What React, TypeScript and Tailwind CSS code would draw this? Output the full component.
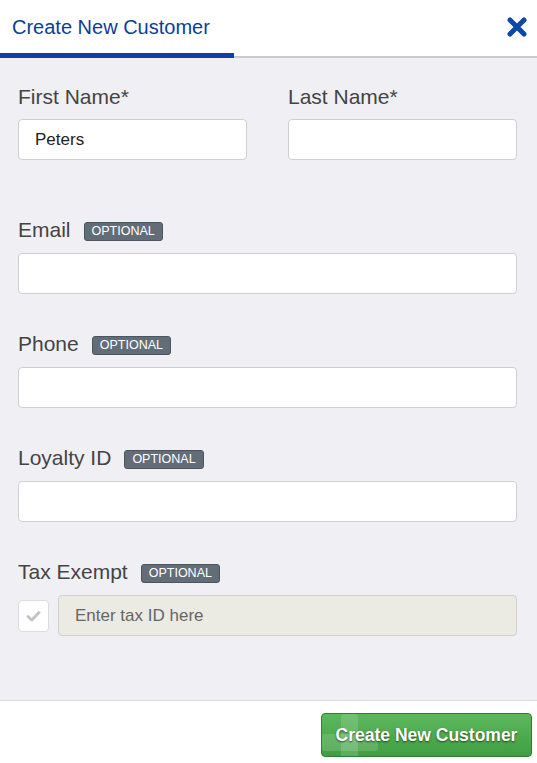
import React from "react";

function Badge() {
  return (
    <span className="relative top-[2px] ml-[13px] inline-flex h-[19px] items-center rounded-[3px] border border-[#4b5560] bg-[#636d78] px-[7px] text-[12.5px] font-normal leading-none text-white">
      OPTIONAL
    </span>
  );
}

function Label({ text, optional }: { text: string; optional?: boolean }) {
  return (
    <div className="flex h-[23px] items-center text-[21px] leading-[23px] text-[#444]">
      <span>{text}</span>
      {optional && <Badge />}
    </div>
  );
}

function Input({ value }: { value?: string }) {
  return (
    <div className="flex h-[41px] items-center rounded-[4px] border border-[#cfcfcf] bg-white px-4 text-[17px] text-[#222]">
      {value}
    </div>
  );
}

export default function App() {
  return (
    <div
      className="flex h-[763px] w-[537px] flex-col bg-white"
      style={{ fontFamily: '"Liberation Sans", Arial, sans-serif' }}
    >
      <div className="relative flex h-[58px] shrink-0 items-center justify-between border-b-2 border-[#cbcbcb] bg-white pb-[2px] pl-3 pr-[9px]">
        <span className="text-[20px] text-[#0d3d99]">Create New Customer</span>
        <svg width="22" height="20" viewBox="0 0 22 20" className="mb-[1px]">
          <path d="M4 3 L18 17 M18 3 L4 17" stroke="#0d47a8" strokeWidth="5" strokeLinecap="round" />
        </svg>
        <div className="absolute -bottom-[2px] left-0 h-[5px] w-[234px] bg-[#0b44a0]" />
      </div>

      <div className="flex flex-1 flex-col bg-[#f0eff4] pl-[18px] pr-[20px] pt-[27px]">
        <div className="grid grid-cols-2 gap-x-[41px]">
          <div className="flex flex-col gap-[11px]">
            <Label text="First Name*" />
            <Input value="Peters" />
          </div>
          <div className="flex flex-col gap-[11px]">
            <Label text="Last Name*" />
            <Input />
          </div>
        </div>

        <div className="mt-[58px] flex flex-col gap-[12px]">
          <Label text="Email" optional />
          <Input />
        </div>

        <div className="mt-[38px] flex flex-col gap-[12px]">
          <Label text="Phone" optional />
          <Input />
        </div>

        <div className="mt-[38px] flex flex-col gap-[12px]">
          <Label text="Loyalty ID" optional />
          <Input />
        </div>

        <div className="mt-[38px] flex flex-col gap-[12px]">
          <Label text="Tax Exempt" optional />
          <div className="flex items-center gap-[9px]">
            <div className="flex h-[32px] w-[31px] shrink-0 items-center justify-center rounded-[4px] border border-[#dcdcdc] bg-white">
              <svg width="15" height="12" viewBox="0 0 15 12">
                <path d="M2 6.5 L5.8 10 L13 2.5" fill="none" stroke="#c4c4c4" strokeWidth="3" strokeLinecap="round" strokeLinejoin="round" />
              </svg>
            </div>
            <div className="flex h-[41px] flex-1 items-center rounded-[4px] border border-[#d0d0d0] bg-[#ebebe4] px-4 text-[17px] text-[#666]">
              Enter tax ID here
            </div>
          </div>
        </div>
      </div>

      <div className="flex h-[63px] shrink-0 items-start justify-end border-t border-[#dddddd] bg-white pr-[5px] pt-[12px]">
        <button className="relative h-[44px] w-[211px] overflow-hidden rounded-[4px] border border-[#2e7d32] bg-gradient-to-b from-[#5cb85c] to-[#3f9f42] text-[17.5px] font-bold text-white [text-shadow:0_1px_2px_rgba(0,0,0,0.6)]">
          <div className="absolute left-[19px] top-0 h-[44px] w-[17px] rounded-[3px] bg-white/15" />
          <div className="absolute left-0 top-[20px] h-[17px] w-[56px] rounded-[3px] bg-white/15" />
          <span className="relative">Create New Customer</span>
        </button>
      </div>
    </div>
  );
}
